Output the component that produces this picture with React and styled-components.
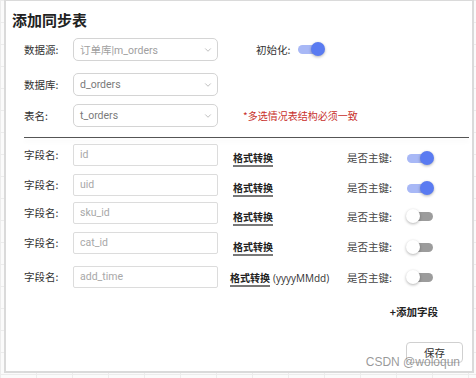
import styled, { createGlobalStyle } from "styled-components";
import { ChevronDown } from "lucide-react";

const GlobalStyle = createGlobalStyle`
  body {
    margin: 0;
    font-family: Roboto, "Noto Sans CJK SC", sans-serif;
    background-color: #fbfbfb;
    background-image:
      linear-gradient(#ececec 1px, transparent 1px),
      linear-gradient(90deg, #ececec 1px, transparent 1px);
    background-size: 36px 22px;
  }
`;

const Dialog = styled.div`
  position: relative;
  box-sizing: border-box;
  width: 470px;
  height: 373px;
  margin-left: 4px;
  border: 2px solid #dadada;
  border-top-width: 1px;
  background: #fff;
  padding: 9px 0 0 18px;
  display: flex;
  flex-direction: column;
`;

const Title = styled.h2`
  margin: 0 0 8px -12px;
  font-size: 15px;
  line-height: 20px;
  font-weight: 700;
  color: #222;
  font-family: "Noto Sans CJK SC", sans-serif;
`;

const Row = styled.div`
  display: flex;
  align-items: center;
  height: 23px;
  flex: none;
  margin-top: ${(p) => p.$gap || 0}px;
`;

const Label = styled.span`
  width: 49px;
  flex: none;
  font-size: 10.5px;
  line-height: 14px;
  color: #333;
  font-family: "Noto Sans CJK SC", sans-serif;
`;

const SelectBox = styled.div`
  box-sizing: border-box;
  width: 145px;
  height: 23px;
  border: 1px solid #d4d4d4;
  border-radius: 5px;
  display: flex;
  align-items: center;
  justify-content: space-between;
  padding: 0 4px 0 6px;
  font-size: 10.5px;
  color: ${(p) => (p.$muted ? "#a0a0a0" : "#7a7a7a")};
  font-family: Roboto, "Noto Sans CJK SC", sans-serif;
  svg {
    color: #999;
  }
`;

const InitLabel = styled.span`
  margin-left: 38px;
  margin-right: 8px;
  font-size: 10.5px;
  color: #333;
  font-family: "Noto Sans CJK SC", sans-serif;
`;

const Warn = styled.span`
  margin-left: 25px;
  font-size: 10px;
  color: #c8302c;
  font-family: "Noto Sans CJK SC", sans-serif;
`;

const Divider = styled.div`
  height: 1px;
  flex: none;
  width: 445px;
  margin: 10px 0 0 0;
  background: #555;
  box-shadow: 0 3px 5px rgba(0, 0, 0, 0.08);
`;

const FieldInput = styled.input`
  box-sizing: border-box;
  width: 145px;
  height: 22px;
  border: 1.5px solid #dcdcdc;
  border-radius: 2px;
  padding: 0 0 0 6px;
  font-size: 10.5px;
  color: #a8a8a8;
  font-family: Roboto, sans-serif;
  outline: none;
`;

const Right = styled.div`
  display: flex;
  align-items: center;
  height: 14px;
  margin-top: ${(p) => p.$shift}px;
`;

const Convert = styled.span`
  box-sizing: border-box;
  width: 129px;
  padding-left: ${(p) => (p.$wide ? 12 : 15)}px;
  font-size: 10px;
  line-height: 14px;
  color: #222;
  font-family: "Noto Sans CJK SC", sans-serif;
  b {
    font-weight: 700;
    text-decoration: underline;
    text-decoration-color: #777;
    text-decoration-thickness: 2px;
    text-underline-offset: 3px;
  }
  span {
    margin-left: 3px;
    font-family: "Open Sans", sans-serif;
    font-size: 10px;
    color: #333;
  }
`;

const KeyLabel = styled.span`
  width: 60px;
  font-size: 10.5px;
  line-height: 14px;
  color: #444;
  font-family: "Noto Sans CJK SC", sans-serif;
`;

const Track = styled.span`
  position: relative;
  display: inline-block;
  width: 26px;
  height: 9px;
  border-radius: 5px;
  background: ${(p) => (p.$on ? "#a8b8f6" : "#9c9c9c")};
`;

const Knob = styled.span`
  position: absolute;
  top: -3px;
  left: ${(p) => (p.$on ? 13 : -1)}px;
  width: 14px;
  height: 14px;
  border-radius: 50%;
  background: ${(p) => (p.$on ? "#5a7bf1" : "#fff")};
  box-shadow: 0 1px 3px rgba(0, 0, 0, 0.3);
`;

const AddRow = styled.div`
  display: flex;
  justify-content: flex-end;
  margin: 17px 34px 0 0;
  font-size: 10.5px;
  line-height: 14px;
  font-weight: 700;
  color: #222;
  font-family: "Noto Sans CJK SC", sans-serif;
`;

const Footer = styled.div`
  display: flex;
  justify-content: flex-end;
  margin: 23px 9px 0 0;
`;

const SaveButton = styled.button`
  width: 57px;
  height: 21px;
  border: 1px solid #d0d0d0;
  border-radius: 4px;
  background: #fff;
  font-size: 10.5px;
  color: #333;
  font-family: "Noto Sans CJK SC", sans-serif;
  padding: 0;
`;

const Watermark = styled.div`
  position: absolute;
  right: 12px;
  bottom: 2px;
  font-size: 12px;
  color: rgba(120, 120, 120, 0.75);
  font-family: "Liberation Sans", Arial, sans-serif;
  pointer-events: none;
`;

const Switch = ({ on }) => (
  <Track $on={on}>
    <Knob $on={on} />
  </Track>
);

const fields = [
  { name: "id", key: true, gap: 5, shift: 7 },
  { name: "uid", key: true, gap: 7, shift: 7 },
  { name: "sku_id", key: false, gap: 5, shift: 8 },
  { name: "cat_id", key: false, gap: 7, shift: 9 },
  { name: "add_time", key: false, gap: 11, shift: 2, fmt: "(yyyyMMdd)" },
];

export default function App() {
  return (
    <>
      <GlobalStyle />
      <Dialog>
        <Title>添加同步表</Title>
        <Row>
          <Label>数据源:</Label>
          <SelectBox $muted>
            订单库|m_orders
            <ChevronDown size={10} strokeWidth={1.5} />
          </SelectBox>
          <InitLabel>初始化:</InitLabel>
          <Switch on />
        </Row>
        <Row $gap={12}>
          <Label>数据库:</Label>
          <SelectBox>
            d_orders
            <ChevronDown size={10} strokeWidth={1.5} />
          </SelectBox>
        </Row>
        <Row $gap={8}>
          <Label>表名:</Label>
          <SelectBox>
            t_orders
            <ChevronDown size={10} strokeWidth={1.5} />
          </SelectBox>
          <Warn>*多选情况表结构必须一致</Warn>
        </Row>
        <Divider />
        {fields.map((f) => (
          <Row key={f.name} $gap={f.gap}>
            <Label>字段名:</Label>
            <FieldInput readOnly defaultValue={f.name} />
            <Right $shift={f.shift}>
              <Convert $wide={!!f.fmt}>
                <b>格式转换</b>
                {f.fmt && <span>{f.fmt}</span>}
              </Convert>
              <KeyLabel>是否主键:</KeyLabel>
              <Switch on={f.key} />
            </Right>
          </Row>
        ))}
        <AddRow>+添加字段</AddRow>
        <Footer>
          <SaveButton>保存</SaveButton>
        </Footer>
        <Watermark>CSDN @woloqun</Watermark>
      </Dialog>
    </>
  );
}
